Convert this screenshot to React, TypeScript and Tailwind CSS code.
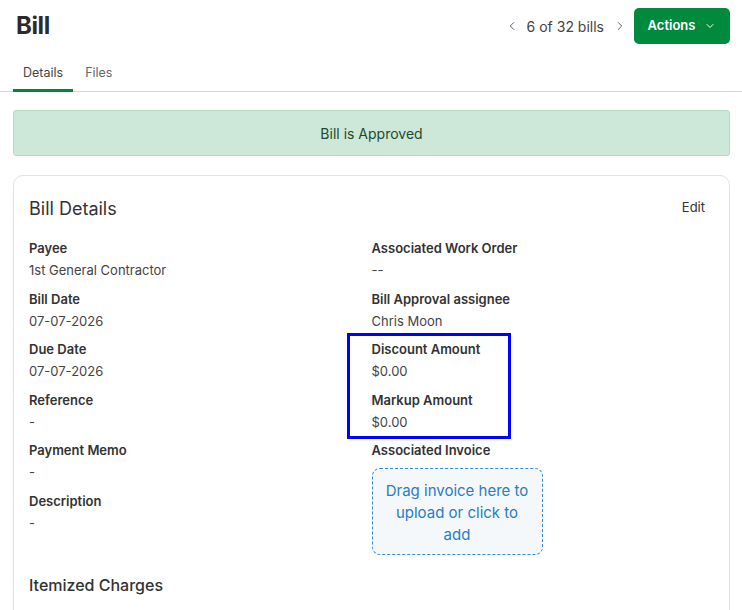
import React from "react";
import { ChevronLeft, ChevronRight, ChevronDown } from "lucide-react";

function Field({ label, value }: { label: string; value: string }) {
  return (
    <div className="flex flex-col">
      <span className="text-[13px] leading-5 font-semibold text-[#333]">{label}</span>
      <span className="text-[13px] leading-5 mt-[2px] text-[#444]">{value}</span>
    </div>
  );
}

export default function App() {
  const left = [
    { label: "Payee", value: "1st General Contractor" },
    { label: "Bill Date", value: "07-07-2026" },
    { label: "Due Date", value: "07-07-2026" },
    { label: "Reference", value: "-" },
    { label: "Payment Memo", value: "-" },
    { label: "Description", value: "-" },
  ];

  return (
    <div className="relative w-[742px] h-[610px] overflow-hidden bg-white font-['Inter','Noto_Sans',sans-serif] text-[#333]">
      {/* header */}
      <div className="flex items-center justify-between pl-4 pr-3 pt-2">
        <h1 className="text-[24px] leading-9 font-bold tracking-[-0.4px] text-[#2b2b2b]">Bill</h1>
        <div className="flex items-center">
          <ChevronLeft className="w-[14px] h-[14px] text-[#555]" strokeWidth={1.6} />
          <span className="text-[14px] text-[#444] ml-[8px] mr-[9px]">6 of 32 bills</span>
          <ChevronRight className="w-[14px] h-[14px] text-[#555]" strokeWidth={1.6} />
          <button className="ml-[7px] h-9 w-[96px] rounded-[5px] bg-[#008a3e] text-white text-[13px] font-semibold flex items-center justify-center gap-[9px]">
            Actions
            <ChevronDown className="w-3 h-3" strokeWidth={2} />
          </button>
        </div>
      </div>

      {/* tabs */}
      <div className="mt-[19px] flex border-b border-[#d6d6d6] pl-[13px]">
        <div className="px-[10px] pb-[6px] border-b-[3px] border-[#00873c] -mb-px text-[12.5px] leading-5 text-[#444]">Details</div>
        <div className="px-[12px] pb-[6px] text-[12.5px] leading-5 text-[#666]">Files</div>
      </div>

      <div className="pl-[13px] pr-3">
        {/* banner */}
        <div className="mt-[18px] h-[46px] rounded-[3px] border border-[#b4dcc3] bg-[#cde8d8] flex items-center justify-center text-[14px] text-[#1d4a2c]">
          Bill is Approved
        </div>

        {/* card */}
        <div className="mt-[19px] rounded-[10px] border border-[#e2e2e2] px-[15px] pt-[15px]">
          <div className="flex items-center justify-between h-[34px]">
            <h2 className="text-[18px] text-[#333]">Bill Details</h2>
            <button className="text-[13px] text-[#333] pr-[9px]">Edit</button>
          </div>

          <div className="mt-[13px] grid grid-cols-2">
            <div className="flex flex-col gap-[8.5px]">
              {left.map((f) => (
                <Field key={f.label} label={f.label} value={f.value} />
              ))}
            </div>
            <div className="flex flex-col gap-[8.5px]">
              <Field label="Associated Work Order" value="--" />
              <Field label="Bill Approval assignee" value="Chris Moon" />
              <Field label="Discount Amount" value="$0.00" />
              <Field label="Markup Amount" value="$0.00" />
              <div className="flex flex-col">
                <span className="text-[13px] leading-5 font-semibold text-[#333]">Associated Invoice</span>
                <div className="mt-[8px] w-[171px] h-[87px] rounded-[8px] border border-dashed border-[#3b8ad6] bg-[#f4f8fb] flex items-center justify-center text-center text-[15px] leading-[22px] text-[#2b7cc4] px-3 pt-[2px]">
                  Drag invoice here to upload or click to add
                </div>
              </div>
            </div>
          </div>

          <h3 className="mt-[18px] text-[16px] leading-6 font-medium text-[#333]">Itemized Charges</h3>
          <div className="mt-[9px] text-right pr-[6px] text-[13px] font-semibold text-[#333]">Amount</div>
        </div>
      </div>

      {/* annotation */}
      <div className="absolute left-[347px] top-[333px] w-[164px] h-[106px] border-[3px] border-[#0000ff]" />
    </div>
  );
}
